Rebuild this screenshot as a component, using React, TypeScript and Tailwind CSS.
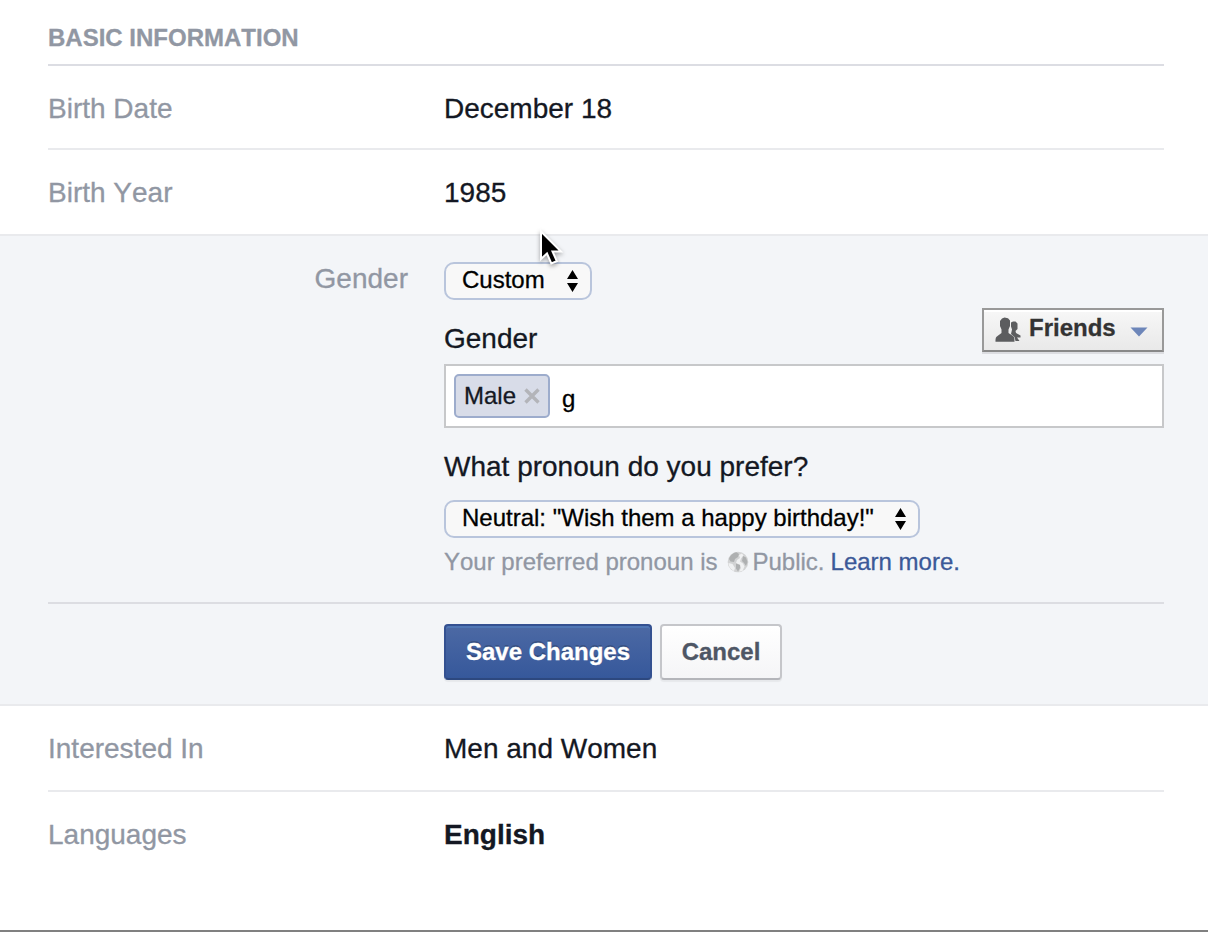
import type { ReactNode } from "react";

function Row({ label, children, className = "" }: { label: string; children: ReactNode; className?: string }) {
  return (
    <div className={`mx-[48px] mr-[44px] flex items-center text-[28px] leading-[32px] ${className}`}>
      <div className="w-[396px] text-[#9197a3]">{label}</div>
      <div className="text-[#141823]">{children}</div>
    </div>
  );
}

function Select({ children, className }: { children: ReactNode; className: string }) {
  return (
    <div
      className={`flex h-[38px] items-center justify-between rounded-[10px] border-2 border-[#b9c5dc] bg-[#f8f8f8] pl-[16px] pr-[11px] text-[24px] leading-[28px] text-black ${className}`}
    >
      <span className="pb-[2px]">{children}</span>
      <svg width="13" height="22" viewBox="0 0 13 22">
        <path d="M6.500 0L12 9H1zM6.500 22L1 13h11z" fill="#000" />
      </svg>
    </div>
  );
}

function FriendsIcon() {
  return (
    <svg width="26" height="26" viewBox="0 0 26 26" fill="#5c5d5f">
      <path d="M16 5.500L18 4.500h2.500l2 2v5.500L20.500 14l.5 2 4.500 2.500v2L22 20.500l2.500 3.500h-4l-1-4-3.500-3 1-4.500-1-3z" />
      <path d="M9.500.5l3.500.7 2 2.300V9l-1.500 3.500v3.500l4.500 3c1.300 1 1.500 2 1.500 5.800H.5c0-3.800.5-4.800 2-5.800L6.500 16v-3.500L5 9V4l2-2.500z" />
    </svg>
  );
}

function GlobeIcon() {
  return (
    <svg width="22" height="22" viewBox="0 0 22 22">
      <circle cx="11" cy="11" r="10.300" fill="#d2d3d4" />
      <path d="M1.500 12l4 1 2.500 4-1 3C4 18.500 1.500 15.500 1.500 12zM12 4l3-1.500 1.500 2-2.500 3-1 3 3 2 1.500 3-2 4.500-3.500.8 2-4-1-3-4-1.800 1-3 3-2z" fill="#f0f1f2" />
      <path d="M2 8C3 4.500 6 1.800 9.500 1.200L12 3l-1 3-3 2-1 3-3.500-.5zM9 12.500l4 1.500v3l-2 3.500-2-3zM16 5l3 1.500 1.500 4.500-1.500 4-2-3-2-2z" fill="#aeb0b1" />
    </svg>
  );
}

export default function App() {
  return (
    <div className="relative flex h-[932px] w-[1208px] flex-col overflow-hidden border-b-2 border-[#808080] bg-white font-['Liberation_Sans',Arial,sans-serif] [font-kerning:none] [-webkit-text-stroke:0.3px_currentColor]">
      <h2 className="ml-[48px] mr-[44px] h-[66px] border-b-2 border-[#dcdde3] pt-[24px] text-[24px] font-bold leading-[28px] text-[#9197a3]">
        BASIC INFORMATION
      </h2>
      <Row label="Birth Date" className="h-[84px] border-b-2 border-[#e9eaed] pt-[3px]">December 18</Row>
      <Row label="Birth Year" className="h-[84px] pt-[2px]">1985</Row>

      <section className="h-[472px] border-y-2 border-[#e9eaed] bg-[#f3f5f8] pl-[48px] pr-[44px]">
        <div className="flex h-[368px] border-b-2 border-[#dcdde2]">
          <div className="w-[360px] pt-[27px] text-right text-[28px] leading-[32px] text-[#9197a3]">Gender</div>
          <div className="ml-[36px] flex flex-1 flex-col pt-[26px]">
            <Select className="w-[148px]">Custom</Select>
            <div className="mt-[8px] flex h-[44px] justify-between">
              <div className="pt-[15px] text-[28px] leading-[32px] text-[#141823]">Gender</div>
              <button className="flex h-[44px] w-[182px] items-center border-2 border-[#999] border-b-[#888] bg-linear-to-b from-[#f7f7f7] to-[#e9e9e9] pl-[11px] text-[24px] font-bold leading-[28px] text-[#333] shadow-[0_2px_0_#dcdde1,inset_0_2px_0_#fff]">
                <FriendsIcon />
                <span className="ml-[8px] pb-[4px]">Friends</span>
                <svg className="ml-[14px] mt-[3px]" width="18" height="10" viewBox="0 0 18 10">
                  <path d="M.5.5h17L9 9.500z" fill="#6d86b9" />
                </svg>
              </button>
            </div>
            <div className="mt-[12px] flex h-[64px] border-2 border-[#c7c8ca] bg-white p-[8px] text-[24px] leading-[28px] text-black">
              <div className="flex h-[44px] w-[96px] items-center rounded-[5px] border-2 border-[#9daccc] bg-[#d8dce8] pl-[8px] text-[#141823]">
                <span>Male</span>
                <svg className="ml-[8px]" width="16" height="16" viewBox="0 0 16 16">
                  <path d="M1.500 1.500l13 13M14.500 1.500l-13 13" stroke="#b3b4b9" strokeWidth="3.400" />
                </svg>
              </div>
              <span className="ml-[12px] pt-[11px]">g</span>
            </div>
            <div className="mt-[23px] text-[28px] leading-[32px] text-[#141823]">What pronoun do you prefer?</div>
            <Select className="mt-[17px] w-[476px]">Neutral: "Wish them a happy birthday!"</Select>
            <div className="mt-[10px] flex items-center text-[24px] leading-[28px] text-[#9197a3]">
              <span>Your preferred pronoun is</span>
              <span className="ml-[9px] mr-[4px]"><GlobeIcon /></span>
              <span>Public.</span>
              <a className="ml-[6px] text-[#3b5998]">Learn more.</a>
            </div>
          </div>
        </div>
        <div className="ml-[396px] mt-[20px] flex gap-[8px] text-[24px] font-bold leading-[28px]">
          <button className="h-[56px] w-[208px] rounded-[4px] border-2 border-[#345191] border-b-[#2d487f] bg-linear-to-b from-[#4c69a4] to-[#36589b] text-white shadow-[inset_0_2px_0_#5077b5,0_2px_1px_rgba(0,0,0,0.05)] [text-shadow:0_-2px_0_rgba(0,0,0,0.2)]">
            Save Changes
          </button>
          <button className="h-[56px] w-[122px] rounded-[4px] border-2 border-[#c5c6ca] border-b-[#b4b5ba] bg-linear-to-b from-white to-[#f5f5f7] text-[#4e5665] shadow-[0_2px_1px_rgba(0,0,0,0.05)]">
            Cancel
          </button>
        </div>
      </section>

      <Row label="Interested In" className="h-[86px] border-b-2 border-[#e9eaed] pt-[2px]">Men and Women</Row>
      <Row label="Languages" className="h-[84px] pt-[2px]"><b>English</b></Row>

      <svg className="absolute left-[538px] top-[228px] drop-shadow-[0_2px_2px_rgba(0,0,0,0.35)]" width="28" height="38" viewBox="0 0 28 38">
        <path d="M3 3.500v27.500l6-5.500 4.300 10 5.500-2.300L14.500 23.500h8.500z" fill="#000" stroke="#fff" strokeWidth="2" />
      </svg>
    </div>
  );
}
